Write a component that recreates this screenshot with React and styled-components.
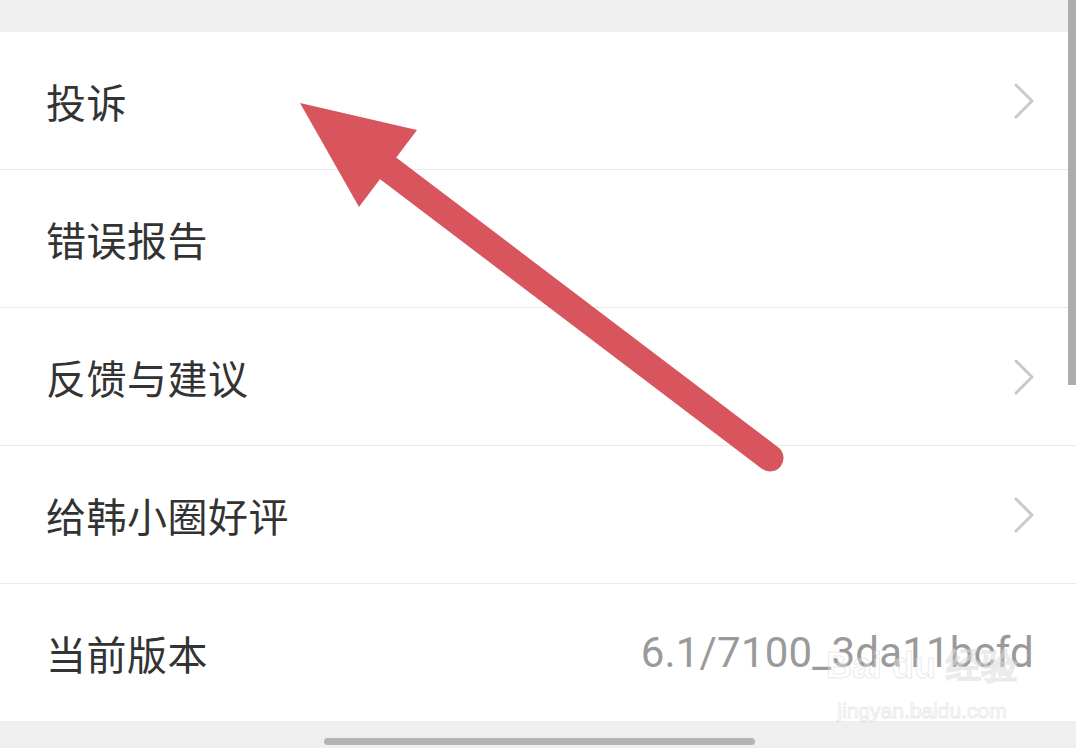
import React from 'react'
import styled, { createGlobalStyle } from 'styled-components'

const GlobalStyle = createGlobalStyle`
  html, body {
    margin: 0;
    padding: 0;
    background: #efefef;
  }
  body {
    font-family: "Noto Sans CJK SC", "Noto Sans", sans-serif;
  }
`

const Page = styled.div`
  position: relative;
  width: 1076px;
  height: 748px;
  overflow: hidden;
  background: #efefef;
  display: flex;
  flex-direction: column;
`

const TopGap = styled.div`
  height: 32px;
  flex: none;
`

const List = styled.ul`
  margin: 0;
  padding: 0;
  list-style: none;
  background: #fff;
`

const Row = styled.li`
  height: 137px;
  display: flex;
  align-items: center;
  justify-content: space-between;
  padding: 0 40px 0 46px;
  border-top: ${p => (p.first ? 'none' : '1px solid #e9e9e9')};
  box-sizing: content-box;
`

const Label = styled.span`
  font-size: 40px;
  color: #333;
  letter-spacing: 0.5px;
  line-height: 1;
`

const Version = styled.span`
  font-family: Roboto, "Noto Sans", sans-serif;
  font-size: 42px;
  color: #9a9a9a;
  margin-right: 2px;
  letter-spacing: 0.2px;
`

const Chevron = () => (
  <svg width="24" height="36" viewBox="0 0 24 36" fill="none">
    <path d="M4 2 L20 18 L4 34" stroke="#c9c9c9" strokeWidth="3" strokeLinecap="round" strokeLinejoin="round" />
  </svg>
)

const Scrollbar = styled.div`
  position: absolute;
  right: 0;
  top: 0;
  width: 8px;
  height: 385px;
  background: #adadad;
`

const HomeBar = styled.div`
  position: absolute;
  left: 324px;
  bottom: 3px;
  width: 431px;
  height: 7px;
  border-radius: 4px;
  background: #b4b4b4;
`

// faint baidu jingyan watermark sitting over the version row
const Watermark = styled.div`
  position: absolute;
  left: 824px;
  top: 648px;
  width: 196px;
  display: flex;
  flex-direction: column;
  align-items: center;
  color: rgba(255, 255, 255, 0.35);
  -webkit-text-stroke: 1px rgba(200, 200, 200, 0.4);
  font-family: "Liberation Sans", sans-serif;
  pointer-events: none;
`

const MarkTop = styled.div`
  font-size: 36px;
  font-weight: 700;
  line-height: 1;
  white-space: nowrap;
`

const MarkBottom = styled.div`
  font-size: 21px;
  line-height: 1;
  margin-top: 16px;
  white-space: nowrap;
`

const ArrowLayer = styled.svg`
  position: absolute;
  left: 0;
  top: 0;
  pointer-events: none;
`

const items = [
  { label: '投诉', chevron: true },
  { label: '错误报告', chevron: false },
  { label: '反馈与建议', chevron: true },
  { label: '给韩小圈好评', chevron: true },
  { label: '当前版本', value: '6.1/7100_3da11bcfd' },
]

export default function App() {
  return (
    <Page>
      <GlobalStyle />
      <TopGap />
      <List>
        {items.map((item, i) => (
          <Row key={item.label} first={i === 0}>
            <Label>{item.label}</Label>
            {item.chevron && <Chevron />}
            {item.value && <Version>{item.value}</Version>}
          </Row>
        ))}
      </List>
      <Scrollbar />
      <HomeBar />
      <Watermark>
        <MarkTop>Bai du 经验</MarkTop>
        <MarkBottom>jingyan.baidu.com</MarkBottom>
      </Watermark>
      <ArrowLayer width="1076" height="748" viewBox="0 0 1076 748">
        <line x1="770" y1="458" x2="385" y2="166" stroke="#d8555d" strokeWidth="27" strokeLinecap="round" />
        <polygon points="300,103 417,130 359,207" fill="#d8555d" />
      </ArrowLayer>
    </Page>
  )
}
